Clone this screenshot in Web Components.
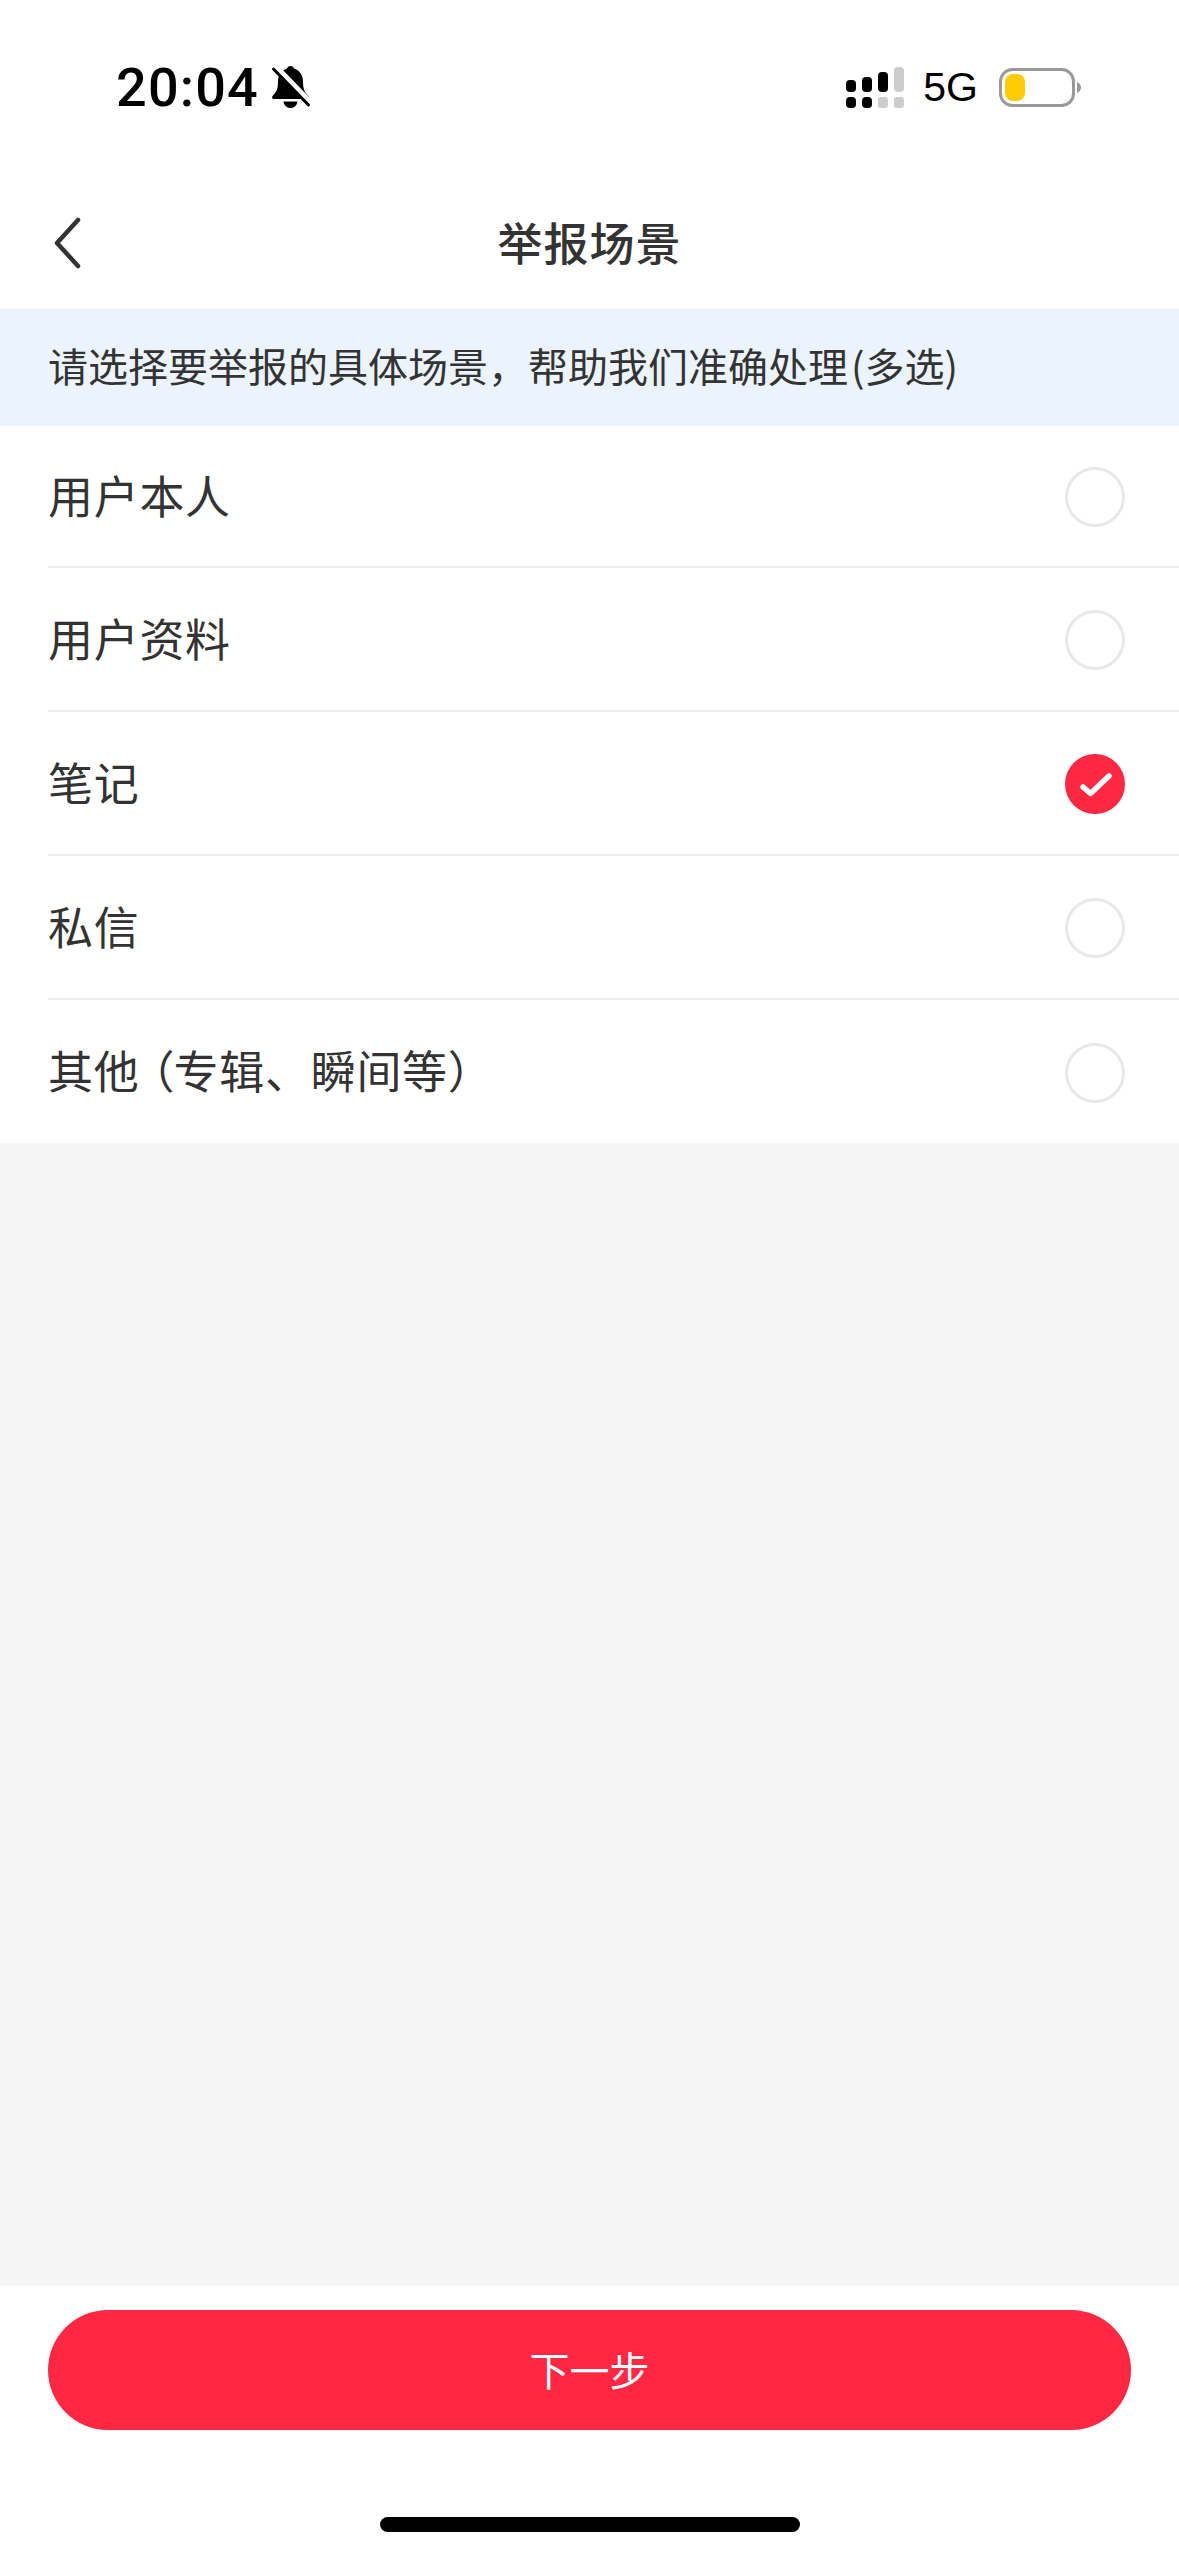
<!DOCTYPE html>
<html lang="zh"><head><meta charset="utf-8"><title>举报场景</title>
<style>
html,body{margin:0;padding:0;background:#fff}
body{font-family:"Noto Sans CJK SC","Noto Sans",sans-serif;color:#333}
</style></head>
<body>
<report-page>
  <status-bar slot="status"></status-bar>
  <nav-bar slot="nav">举报场景</nav-bar>
  <notice-banner slot="notice">请选择要举报的具体场景，帮助我们准确处理<span style="margin-left:3px">(</span>多选)</notice-banner>
  <report-list slot="list">
    <report-row first>用户本人</report-row>
    <report-row>用户资料</report-row>
    <report-row checked>笔记</report-row>
    <report-row>私信</report-row>
    <report-row last>其他<span style="font-feature-settings:'palt';margin-left:11px">（</span>专辑、瞬间等）</report-row>
  </report-list>
  <page-footer slot="footer">下一步</page-footer>
</report-page>
<script>
function def(name, css, html){
  customElements.define(name, class extends HTMLElement{
    constructor(){super();const r=this.attachShadow({mode:'open'});r.innerHTML='<style>'+css+'</style>'+html;}
  });
}
def('report-page',
 `:host{display:flex;flex-direction:column;width:1179px;height:2556px;background:#f5f5f5;overflow:hidden}
  .fill{flex:1}`,
 `<slot name="status"></slot><slot name="nav"></slot><slot name="notice"></slot><slot name="list"></slot><div class="fill"></div><slot name="footer"></slot>`);
def('status-bar',
 `:host{display:flex;align-items:center;height:177px;box-sizing:border-box;padding:0 98px 2px 116px;background:#fff;color:#000}
  .time{font:500 54px/1 Roboto,"Liberation Sans",sans-serif;letter-spacing:1.200px;width:155px;white-space:nowrap}
  .sp{flex:1}
  .g{font:400 41px/1 "Liberation Sans",sans-serif;margin:0 21px 0 19px}
  svg{display:block}`,
 `<span class="time">20:04</span>
  <svg width="40" height="43" viewBox="0 0 40 43"><path d="M19.5 0C21.5 0 22.7 1.2 23.2 2.8C29 4.5 32 9.500 32 15.500C32 23.500 34 26.500 37 29.500C38.500 31 38 33 36 33H3C1 33 .5 31 2 29.500C5 26.500 7 23.500 7 15.500C7 9.500 10 4.500 15.800 2.800C16.300 1.200 17.500 0 19.500 0Z"/><path d="M12.500 35.500H26.500C26 39.500 23 42 19.500 42C16 42 13 39.500 12.500 35.500Z"/><path d="M5 .500L40 36.500" stroke="#fff" stroke-width="5" fill="none"/><path d="M2.500 3L37.500 39" stroke="#000" stroke-width="3" stroke-linecap="round" fill="none"/></svg>
  <span class="sp"></span>
  <svg width="58" height="41" viewBox="0 0 58 41"><rect x="0" y="13" width="10" height="12" rx="4"/><rect x="16" y="10" width="10" height="15" rx="4"/><rect x="32" y="5" width="10" height="20" rx="4"/><rect x="48" y="0" width="10" height="25" rx="4" fill="#ccc"/><rect x="0" y="30" width="10" height="11" rx="4"/><rect x="16" y="30" width="10" height="11" rx="4"/><rect x="32" y="30" width="10" height="11" rx="3" fill="#ccc"/><rect x="48" y="30" width="10" height="11" rx="3" fill="#ccc"/></svg>
  <span class="g">5G</span>
  <svg width="82" height="39" viewBox="0 0 82 39"><rect x="1.500" y="1.500" width="73" height="36" rx="12" fill="none" stroke="#999" stroke-width="3"/><rect x="6" y="6" width="20" height="27" rx="8" fill="#ffcc00"/><path d="M78 14C80.500 15 82 17 82 19.500C82 22 80.500 24 78 25Z" fill="#999"/></svg>`);
def('nav-bar',
 `:host{display:flex;align-items:center;justify-content:center;position:relative;height:132px;box-sizing:border-box;padding-bottom:3px;background:#fff;color:#333}
  .t{font-size:45px;font-weight:500;line-height:1;letter-spacing:1px}
  svg{position:absolute;left:52px;top:39px}`,
 `<svg width="32" height="54" viewBox="0 0 32 54"><path d="M26 4L5 27L26 50" fill="none" stroke="#333" stroke-width="4.500" stroke-linecap="round" stroke-linejoin="round"/></svg><span class="t"><slot></slot></span>`);
def('notice-banner',
 `:host{display:flex;align-items:center;height:117px;box-sizing:border-box;padding:0 0 6px 48px;background:#ebf3fd;color:#333;font-size:40px;white-space:nowrap}`,
 `<span><slot></slot></span>`);
def('report-list',`:host{display:block;background:#fff}`,`<slot></slot>`);
def('report-row',
 `:host{display:block;background:#fff;padding-left:48px;color:#333;font-size:45px;letter-spacing:.7px}
  .r{display:flex;align-items:center;height:142px;padding-right:54px;border-bottom:2px solid #eee}
  :host([first]) .r{height:140px}
  :host([last]) .r{border-bottom:0;height:143px}
  .l{flex:1;white-space:nowrap;padding-bottom:4px}
  .c{width:60px;height:60px;box-sizing:border-box;border-radius:50%;border:3px solid #e8e8e8;background:#fff;margin-top:2px}
  svg{display:none;width:60px;height:60px}
  :host([checked]) .c{border:0;background:#ff2742}
  :host([checked]) svg{display:block}`,
 `<div class="r"><span class="l"><slot></slot></span><span class="c"><svg viewBox="0 0 60 60"><path d="M18 33L25.500 39.500L44 22" fill="none" stroke="#fff" stroke-width="5.500" stroke-linecap="round" stroke-linejoin="round"/></svg></span></div>`);
def('page-footer',
 `:host{display:flex;flex-direction:column;align-items:center;height:270px;box-sizing:border-box;padding-top:24px;background:#fff}
  .b{width:1083px;height:120px;box-sizing:border-box;padding-bottom:3px;border-radius:60px;background:#ff2742;color:#fff;font-size:40px;display:flex;align-items:center;justify-content:center}
  .h{width:420px;height:15px;border-radius:8px;background:#000;margin-top:87px}`,
 `<div class="b"><span><slot></slot></span></div><div class="h"></div>`);
</script>
</body></html>
